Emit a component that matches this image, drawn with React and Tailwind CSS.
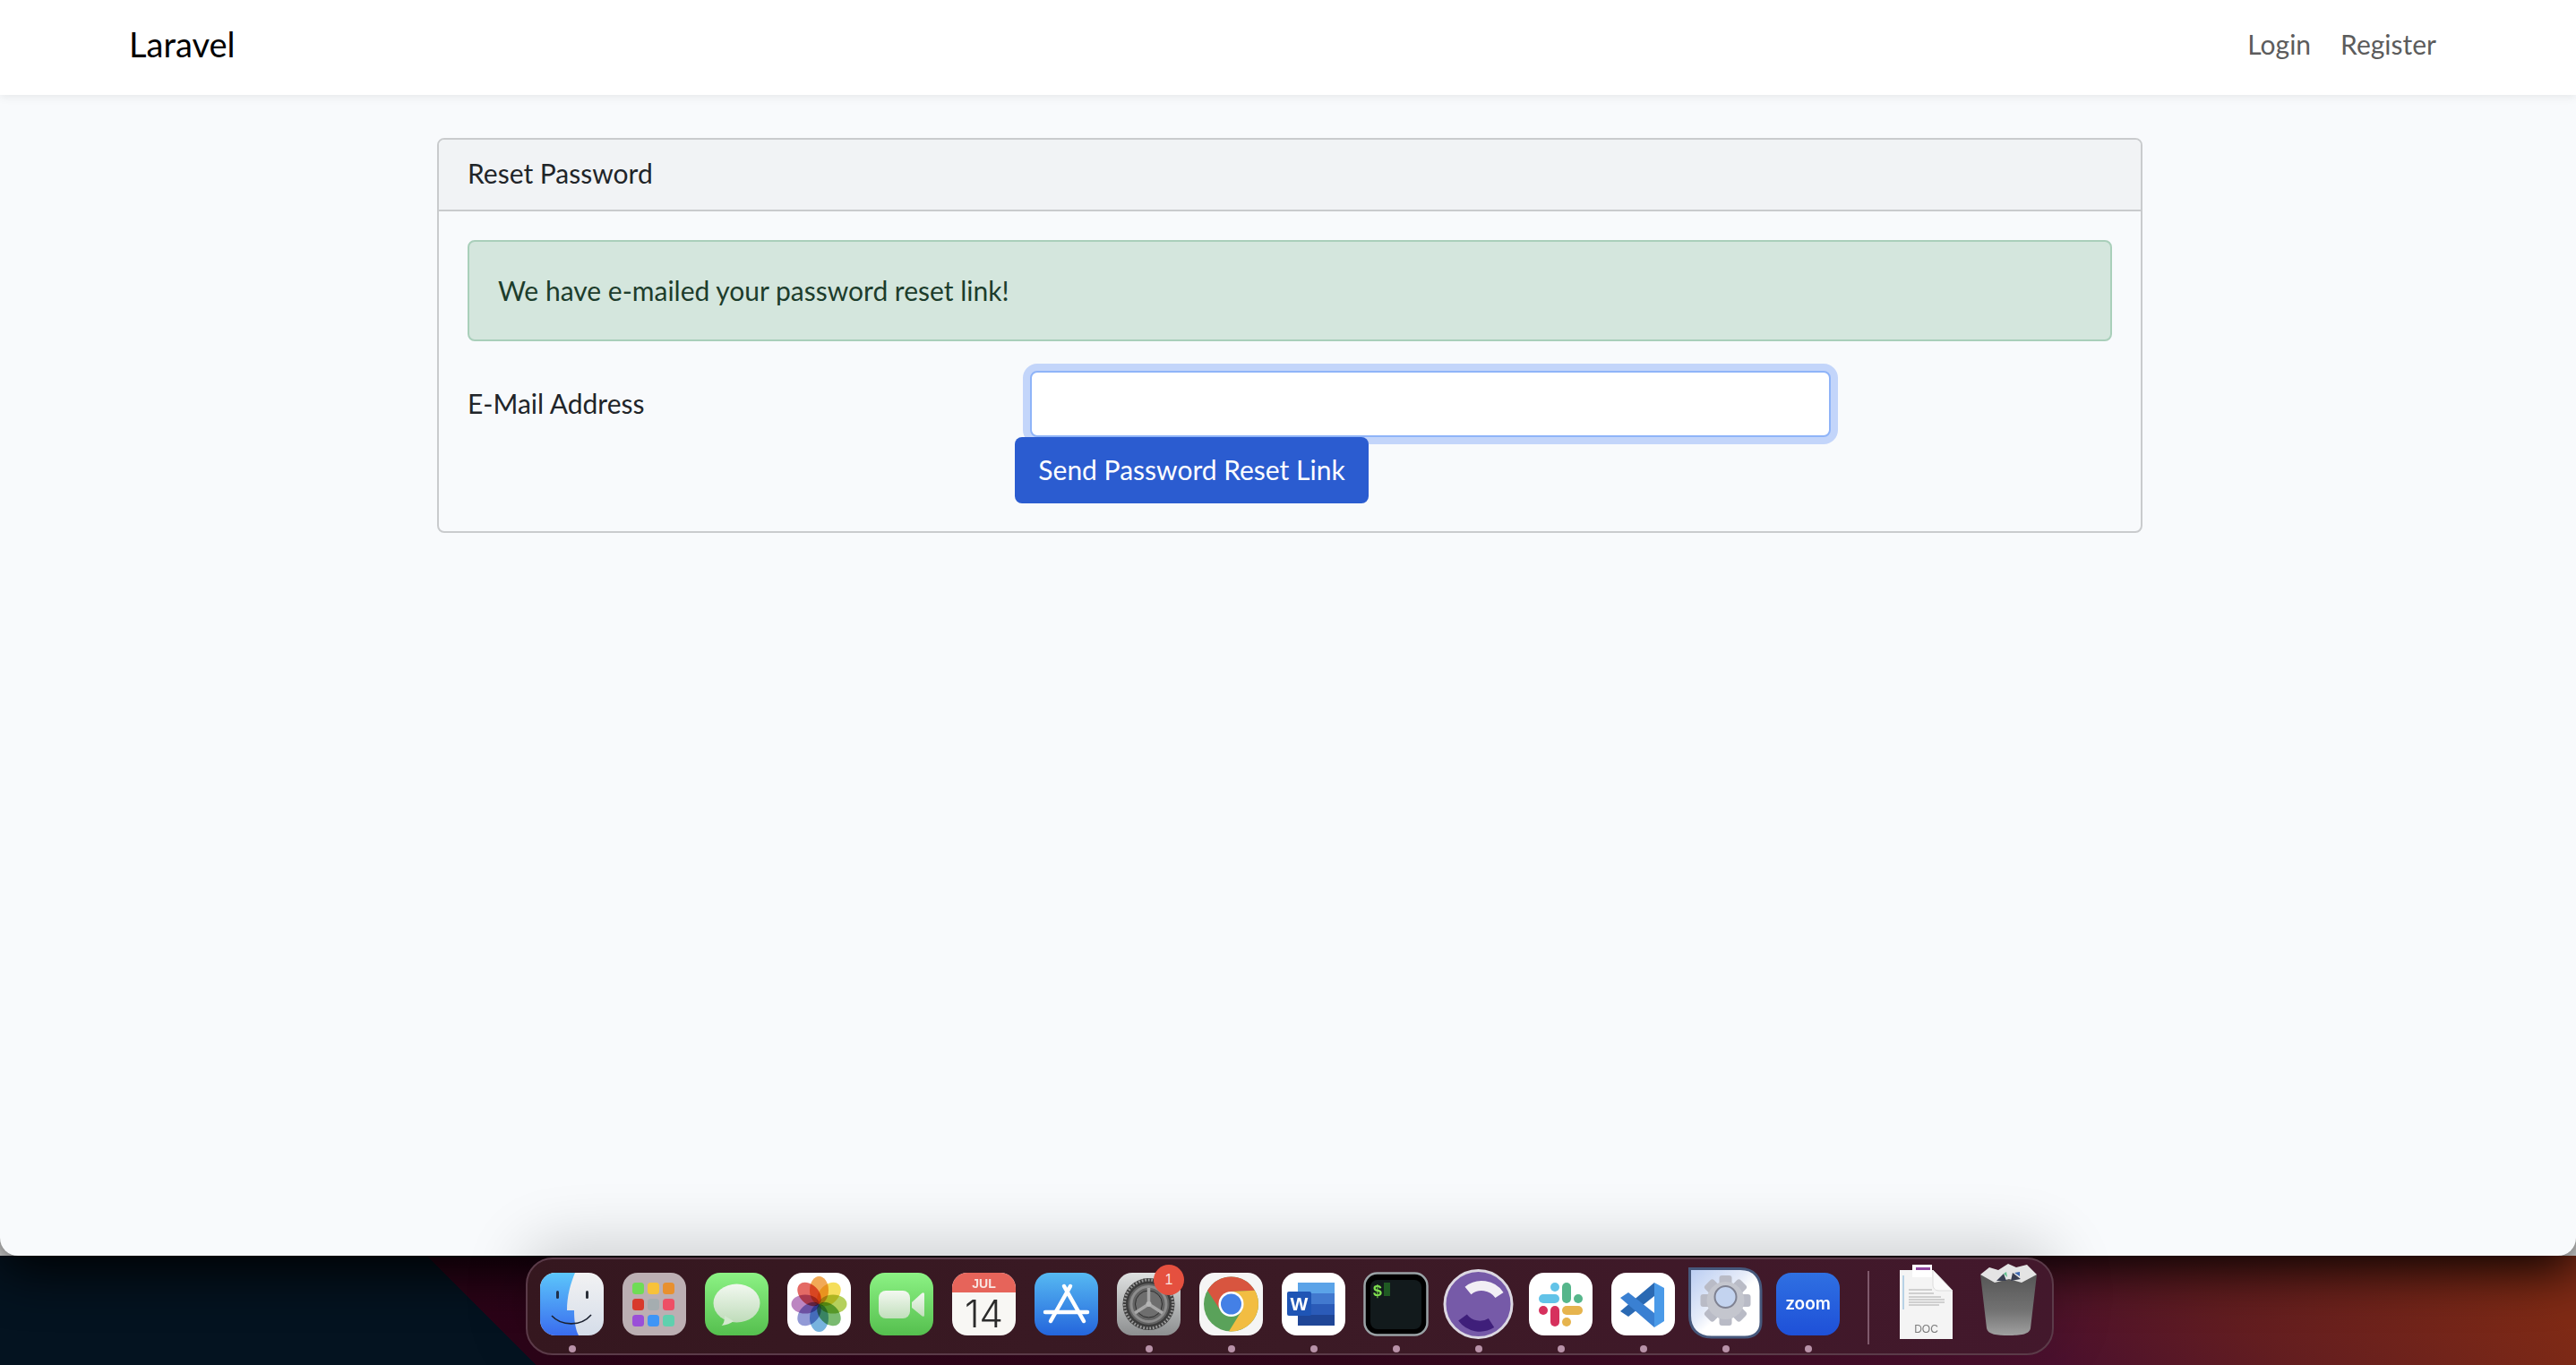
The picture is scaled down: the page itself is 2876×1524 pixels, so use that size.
import React from 'react';

const sans = "font-['Lato','Noto_Sans',sans-serif]";

const Icon = ({ children }) => (
    <svg width="71" height="70" viewBox="0 0 71 70" className="block overflow-visible">
        {children}
    </svg>
);

const Finder = () => (
    <Icon>
        <defs>
            <linearGradient id="fb" x1="0" y1="0" x2="0" y2="1"><stop offset="0" stopColor="#5cc6fb" /><stop offset="1" stopColor="#3a6cee" /></linearGradient>
            <linearGradient id="fw" x1="0" y1="0" x2="0" y2="1"><stop offset="0" stopColor="#f2f2f3" /><stop offset="1" stopColor="#d5dde9" /></linearGradient>
        </defs>
        <rect width="71" height="70" rx="17" fill="url(#fw)" />
        <path d="M17 0H39C34 12 30 26 30 42H38C38 52 39 62 43 70H17A17 17 0 0 1 0 53V17A17 17 0 0 1 17 0Z" fill="url(#fb)" />
        <rect x="18" y="20" width="3" height="9" rx="1.5" fill="#20304a" />
        <rect x="51" y="20" width="3" height="9" rx="1.5" fill="#2a2f38" />
        <path d="M13 48C24 60 46 60 57 47" fill="none" stroke="#1c2230" strokeWidth="1.6" />
    </Icon>
);

const Launchpad = () => {
    const colors = ['#6fdc55', '#f8c23a', '#e8902f', '#d83a2c', '#a5adb0', '#ee4f66', '#9a4fd8', '#3f95f5', '#5fd0ae'];
    return (
        <Icon>
            <rect width="71" height="70" rx="17" fill="#bcafb3" />
            {colors.map((c, i) => (
                <rect key={c} x={11 + (i % 3) * 17} y={11 + Math.floor(i / 3) * 18} width="13" height="13" rx="3.5" fill={c} />
            ))}
        </Icon>
    );
};

const Messages = () => (
    <Icon>
        <defs>
            <linearGradient id="mg" x1="0" y1="0" x2="0" y2="1"><stop offset="0" stopColor="#8cf284" /><stop offset="1" stopColor="#55bf4e" /></linearGradient>
            <linearGradient id="mb" x1="0" y1="0" x2="0" y2="1"><stop offset="0" stopColor="#f2f8f0" /><stop offset="1" stopColor="#bfdcba" /></linearGradient>
        </defs>
        <rect width="71" height="70" rx="17" fill="url(#mg)" />
        <ellipse cx="35.5" cy="34" rx="26" ry="21.500" fill="url(#mb)" />
        <path d="M22 48C22 54 21 57 18.500 59C24 58.500 29 56.500 32 54Z" fill="#d3e8cf" />
    </Icon>
);

const Photos = () => {
    const petals = ['#f09a38', '#f4d93e', '#a8c83f', '#62ae57', '#5fa6d8', '#7f88cf', '#b06fb6', '#e0504a'];
    return (
        <Icon>
            <rect width="71" height="70" rx="17" fill="#fff" />
            {petals.map((c, i) => (
                <ellipse key={c} cx="35.5" cy="19.500" rx="10.500" ry="15.500" fill={c} opacity="0.85" transform={`rotate(${i * 45} 35.5 35)`} style={{ mixBlendMode: 'multiply' }} />
            ))}
        </Icon>
    );
};

const FaceTime = () => (
    <Icon>
        <defs>
            <linearGradient id="ft" x1="0" y1="0" x2="0" y2="1"><stop offset="0" stopColor="#8cf284" /><stop offset="1" stopColor="#55bf4e" /></linearGradient>
            <linearGradient id="fc" x1="0" y1="0" x2="0" y2="1"><stop offset="0" stopColor="#f3f8f1" /><stop offset="1" stopColor="#c2dfbc" /></linearGradient>
        </defs>
        <rect width="71" height="70" rx="17" fill="url(#ft)" />
        <rect x="10" y="20" width="35" height="31" rx="8" fill="url(#fc)" />
        <path d="M47 33L58 23C60 21.500 61 22.500 61 24V47C61 49 60 49.500 58 48L47 39Z" fill="url(#fc)" />
    </Icon>
);

const Calendar = () => (
    <Icon>
        <defs>
            <clipPath id="cc"><rect width="71" height="70" rx="17" /></clipPath>
        </defs>
        <g clipPath="url(#cc)">
            <rect width="71" height="70" fill="#f8f7f4" />
            <rect width="71" height="22" fill="#e6645a" />
        </g>
        <text x="35.5" y="17" textAnchor="middle" fontFamily="Liberation Sans" fontWeight="700" fontSize="14" fill="#f8e6e2">JUL</text>
        <text x="35.5" y="61" textAnchor="middle" fontFamily="Inter" fontWeight="300" fontSize="42" fill="#2b2b2b">14</text>
    </Icon>
);

const AppStore = () => (
    <Icon>
        <defs>
            <linearGradient id="as" x1="0" y1="0" x2="0" y2="1"><stop offset="0" stopColor="#56b9f2" /><stop offset="1" stopColor="#2465dc" /></linearGradient>
        </defs>
        <rect width="71" height="70" rx="17" fill="url(#as)" />
        <g stroke="#fff" strokeLinecap="round" fill="none">
            <path d="M33 15L55 54M40 15L18 54" strokeWidth="4.500" />
            <path d="M12 44H59" strokeWidth="4.500" />
        </g>
    </Icon>
);

const Settings = () => (
    <Icon>
        <defs>
            <linearGradient id="sg" x1="0" y1="0" x2="0" y2="1"><stop offset="0" stopColor="#dfe1e1" /><stop offset="1" stopColor="#8d8f90" /></linearGradient>
        </defs>
        <rect width="71" height="70" rx="17" fill="url(#sg)" />
        <circle cx="35.5" cy="35" r="29" fill="#3c3c3c" />
        <circle cx="35.5" cy="35" r="27" fill="none" stroke="#9a9a9a" strokeWidth="3" strokeDasharray="1.800 1.800" />
        <circle cx="35.5" cy="35" r="23" fill="#636363" />
        <circle cx="35.5" cy="35" r="19.500" fill="none" stroke="#8d8d8d" strokeWidth="3" />
        <circle cx="35.5" cy="35" r="15" fill="#6e6e6e" stroke="#2e2e2e" strokeWidth="1" />
        <path d="M35.5 35V17M35.5 35L20 45M35.5 35L51 45" stroke="#a8a8a8" strokeWidth="3.500" />
        <circle cx="35.5" cy="35" r="3" fill="#b5b5b5" />
    </Icon>
);

const Chrome = () => (
    <Icon>
        <rect width="71" height="70" rx="17" fill="#f5f5f5" />
        <circle cx="35.5" cy="35" r="30.500" fill="#5aa25a" />
        <path d="M9.100 19.750A30.500 30.500 0 0 1 61.900 19.750L35.500 21L23.500 42Z" fill="#d8553f" />
        <path d="M61.900 19.750A30.500 30.500 0 0 1 33 65.400L47.500 42L35.500 21Z" fill="#f2bd42" />
        <circle cx="35.5" cy="35" r="14" fill="#fff" />
        <circle cx="35.5" cy="35" r="11.500" fill="#4480e6" />
    </Icon>
);

const Word = () => (
    <Icon>
        <rect width="71" height="70" rx="17" fill="#fff" />
        <rect x="18" y="11" width="41" height="12" fill="#5ba3e8" />
        <rect x="18" y="23" width="41" height="12" fill="#4279cf" />
        <rect x="18" y="35" width="41" height="12" fill="#2b5bb8" />
        <rect x="18" y="47" width="41" height="12" fill="#1f4697" />
        <rect x="6" y="21" width="27" height="27" rx="2" fill="#1f55b5" />
        <text x="19.500" y="42" textAnchor="middle" fontFamily="Liberation Sans" fontWeight="700" fontSize="21" fill="#fff">W</text>
    </Icon>
);

const Terminal = () => (
    <Icon>
        <rect x="0.500" y="0.500" width="70" height="69" rx="14" fill="#000" stroke="#9aa3a6" strokeWidth="2.500" />
        <rect x="7" y="8" width="57" height="55" rx="8" fill="#121a1c" />
        <text x="15" y="26" textAnchor="middle" fontFamily="Liberation Mono" fontWeight="700" fontSize="18" fill="#7ee04f">$</text>
        <rect x="22" y="11" width="7" height="15" fill="#1f5a23" />
    </Icon>
);

const Purple = () => (
    <Icon>
        <circle cx="35.5" cy="35" r="37.500" fill="#765aa8" stroke="#dcd8e2" strokeWidth="3" />
        <path d="M24 20A24 24 0 0 1 59 25" fill="none" stroke="#f2eff5" strokeWidth="11" />
        <path d="M18 50A24 24 0 0 0 50 56" fill="none" stroke="#3f1f7a" strokeWidth="12" />
    </Icon>
);

const Slack = () => (
    <Icon>
        <rect width="71" height="70" rx="17" fill="#fff" />
        <rect x="11" y="24" width="23" height="10" rx="5" fill="#62c3e8" />
        <rect x="24" y="11" width="10" height="10" rx="5" fill="#62c3e8" />
        <rect x="37" y="11" width="10" height="23" rx="5" fill="#56b68b" />
        <rect x="50" y="24" width="10" height="10" rx="5" fill="#56b68b" />
        <rect x="37" y="37" width="23" height="10" rx="5" fill="#e6b44e" />
        <rect x="37" y="50" width="10" height="10" rx="5" fill="#e6b44e" />
        <rect x="24" y="37" width="10" height="23" rx="5" fill="#d6315d" />
        <rect x="11" y="37" width="10" height="10" rx="5" fill="#d6315d" />
    </Icon>
);

const VsCode = () => (
    <Icon>
        <rect width="71" height="70" rx="17" fill="#fff" />
        <path d="M48 11V26L19 49L10 43Z" fill="#2a69b3" />
        <path d="M10 28L19 22L48 45V61Z" fill="#3a80d2" />
        <path d="M48 11L59 17V54L48 61Z" fill="#4a9ae8" />
    </Icon>
);

const gearTeeth = [0, 45, 90, 135, 180, 225, 270, 315];

const GearDoc = () => (
    <Icon>
        <defs>
            <linearGradient id="gd" x1="0" y1="0" x2="1" y2="1"><stop offset="0" stopColor="#b9ccf2" /><stop offset="0.42" stopColor="#e6ecf9" /><stop offset="0.55" stopColor="#ffffff" /></linearGradient>
        </defs>
        <path d="M-4.500 -4.500H52C68 -4.500 75 6 75 20V55C75 66 68 72 57 72H20C4 72 -4.500 62 -4.500 48Z" fill="url(#gd)" stroke="#46587c" strokeWidth="3" />
        {gearTeeth.map((a) => (
            <rect key={a} x="28.500" y="3" width="14" height="14" rx="3" fill="#b9bbc6" transform={`rotate(${a} 35.5 31)`} />
        ))}
        <circle cx="35.5" cy="31" r="21" fill="#c4c6ce" />
        <circle cx="35.5" cy="27" r="12" fill="#c3d3ef" stroke="#7f8292" strokeWidth="2" />
    </Icon>
);

const ZoomApp = () => (
    <Icon>
        <defs>
            <linearGradient id="zm" x1="0" y1="0" x2="0" y2="1"><stop offset="0" stopColor="#2f70e2" /><stop offset="1" stopColor="#1e50d8" /></linearGradient>
        </defs>
        <rect width="71" height="70" rx="17" fill="url(#zm)" />
        <text x="35.5" y="41" textAnchor="middle" fontFamily="Inter" fontWeight="600" fontSize="19" fill="#fff">zoom</text>
    </Icon>
);

const DocFile = () => (
    <Icon>
        <path d="M6 -3H43L65 20V74H6Z" fill="#f4f4f4" />
        <rect x="20" y="-9" width="22" height="14" fill="#fff" />
        <rect x="24" y="-6" width="16" height="3" fill="#90459e" />
        <path d="M43 -3L65 20H50C45 20 43 17 43 13Z" fill="#fafafa" stroke="#dcdcdc" />
        <g stroke="#9a9a9a" strokeWidth="0.800">
            <path d="M16 19H42M16 23H44M16 27H52M16 30H56M16 33H56M16 36H50" />
        </g>
        <rect x="9" y="3" width="2" height="38" fill="#b8d2e6" />
        <text x="35.5" y="67" textAnchor="middle" fontFamily="Liberation Sans" fontSize="12" fill="#7c7c7c">DOC</text>
    </Icon>
);

const Trash = () => (
    <Icon>
        <defs>
            <linearGradient id="tr" x1="0" y1="0" x2="0" y2="1"><stop offset="0" stopColor="#565656" /><stop offset="0.6" stopColor="#737373" /><stop offset="1" stopColor="#a0a0a0" /></linearGradient>
        </defs>
        <path d="M4 2C15 8 56 8 67 2L60 62C59 69 48 70 35.500 70C23 70 12 69 11 62Z" fill="url(#tr)" />
        <path d="M4 2L14 -6L24 -3L35 -10L44 -6L56 -9L67 2L50 11L36 7L20 11Z" fill="#e4e4e4" />
        <path d="M22 9L30 1L33 9ZM38 9L40 0L49 7Z" fill="#3a3f52" />
        <path d="M30 1L33 -1L34 5Z" fill="#5fbf8d" />
        <path d="M42 0L48 -1L48 4Z" fill="#3d68b0" />
    </Icon>
);

const apps = [
    { name: 'finder', Glyph: Finder },
    { name: 'launchpad', Glyph: Launchpad, off: true },
    { name: 'messages', Glyph: Messages, off: true },
    { name: 'photos', Glyph: Photos, off: true },
    { name: 'facetime', Glyph: FaceTime, off: true },
    { name: 'calendar', Glyph: Calendar, off: true },
    { name: 'appstore', Glyph: AppStore, off: true },
    { name: 'settings', Glyph: Settings, badge: '1' },
    { name: 'chrome', Glyph: Chrome },
    { name: 'word', Glyph: Word },
    { name: 'terminal', Glyph: Terminal },
    { name: 'purple', Glyph: Purple },
    { name: 'slack', Glyph: Slack },
    { name: 'vscode', Glyph: VsCode },
    { name: 'gear', Glyph: GearDoc },
    { name: 'zoom', Glyph: ZoomApp },
];

const DockItem = ({ Glyph, off, badge }) => (
    <div className="relative flex w-[71px] flex-col items-center">
        <Glyph />
        <div className={`mt-[11px] h-2 w-2 rounded-full ${off ? 'bg-transparent' : 'bg-[#b892a8]'}`} />
        {badge && (
            <div className="absolute -top-[9px] -right-[4px] flex h-[34px] w-[34px] items-center justify-center rounded-full bg-[#e5503f] font-['Liberation_Sans',sans-serif] text-[16px] text-[#fbe4df]">
                {badge}
            </div>
        )}
    </div>
);

const Dock = () => (
    <div className="relative z-20 ml-[4px] mt-[2px] flex h-[109px] items-start gap-[21px] rounded-[30px] border-2 border-[#5b3b49] bg-[linear-gradient(90deg,#35171f,#3b1a25_50%,#43182c)] pl-[14px] pr-[13px] pt-[15px] shadow-[0_-14px_70px_rgba(0,0,0,0.18)]">
        {apps.map(({ name, ...rest }) => (
            <DockItem key={name} {...rest} />
        ))}
        <div className="ml-[10px] mr-[7px] -mt-[2px] h-[82px] w-[2px] bg-[#7f5a6c]" />
        <DockItem Glyph={DocFile} off />
        <DockItem Glyph={Trash} off />
    </div>
);

const Navbar = () => (
    <nav className="flex h-[106px] items-center justify-between bg-white pb-[7px] pl-[144px] pr-[156px] shadow-[0_2px_10px_rgba(0,0,0,0.08)]">
        <a className="text-[38px] text-black">Laravel</a>
        <div className="flex gap-[33px] text-[30px] text-[#5c5c5c]">
            <a>Login</a>
            <a>Register</a>
        </div>
    </nav>
);

const ResetCard = () => (
    <div className="ml-[488px] mt-[48px] w-[1904px] rounded-lg border-2 border-[#c9cbcd] text-[30px] text-[#212529]">
        <div className="flex h-[80px] items-center rounded-t-md border-b-2 border-[#c9cbcd] bg-[#f1f3f5] px-[32px] pb-[3px]">
            Reset Password
        </div>
        <div className="px-[32px] pb-[31px] pt-[32px]">
            <div className="flex h-[113px] items-center rounded-lg border-2 border-[#a9cfba] bg-[#d4e6dd] px-[32px] text-[#1d3d2c]">
                We have e-mailed your password reset link!
            </div>
            <div className="mt-[33px] flex items-center">
                <label className="w-[628px] pb-[2px]">E-Mail Address</label>
                <input className="h-[74px] w-[894px] rounded-lg border-2 border-[#8fb4f8] bg-white shadow-[0_0_0_8px_#c3d5fa] outline-none" />
            </div>
            <button className="relative ml-[611px] block h-[74px] w-[395px] rounded-lg bg-[#2b5cd0] pb-[2px] text-white">
                Send Password Reset Link
            </button>
        </div>
    </div>
);

const App = () => (
    <div className={`flex h-[1524px] w-[2876px] flex-col overflow-hidden ${sans}`}>
        <div className="relative z-10 h-[1402px] rounded-b-[20px] bg-[#f8fafc] shadow-[0_14px_60px_rgba(0,0,0,1)]">
            <Navbar />
            <ResetCard />
        </div>
        <div className="flex h-[122px] justify-center bg-[linear-gradient(45deg,#041320_423px,#2c0418_423px,#33071c_1060px,#4b102e_1626px,#621d20_1800px,#7f2a15_2060px)]">
            <Dock />
        </div>
    </div>
);

export default App;
